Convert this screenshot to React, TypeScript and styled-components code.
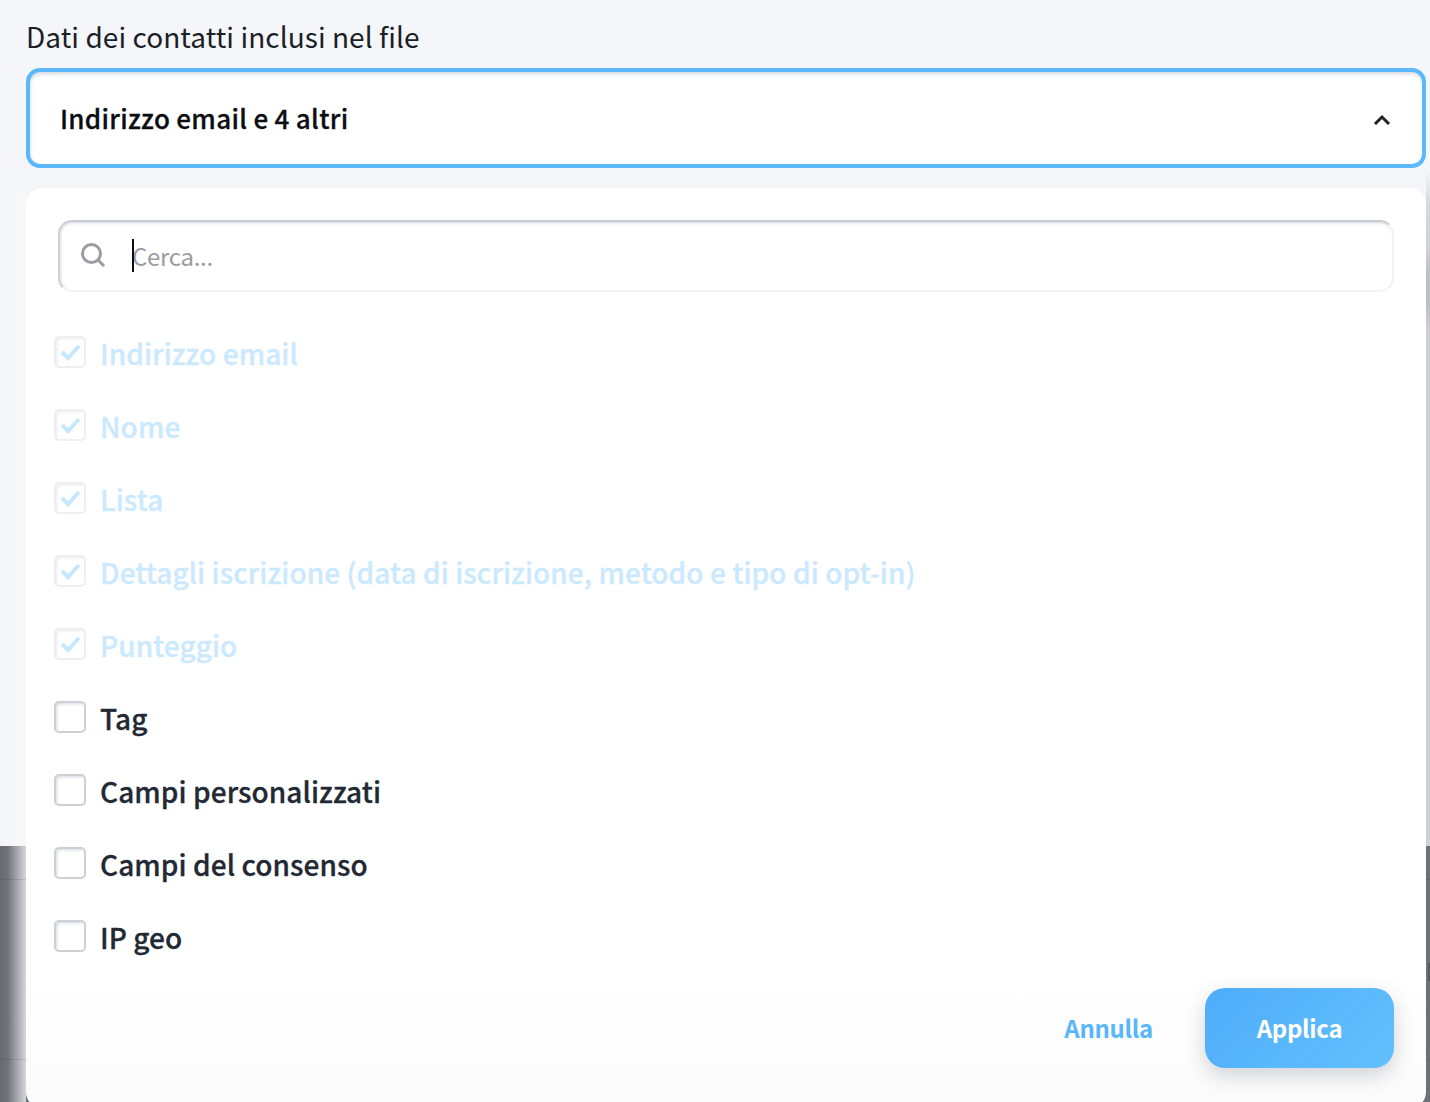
import { createGlobalStyle, styled } from "styled-components"

const GlobalStyle = createGlobalStyle`
    html, body {
        margin: 0;
        padding: 0;
        height: 100%;
        overflow: hidden;
    }

    body {
        background: #6d7077;
        font-family: "Noto Sans CJK JP", "Noto Sans", sans-serif;
    }
`

const Page = styled.div`
    position: relative;
    width: 1430px;
    height: 1102px;
    overflow: hidden;
`

const Backdrop = styled.div`
    display: flex;
    flex-direction: column;
    height: 1102px;
`

const FormArea = styled.div`
    height: 846px;
    box-sizing: border-box;
    padding: 15px 4px 0 26px;
    background:
        linear-gradient(
            #f5f6fa 170px, #d6d8db 205px, #cfd1d4 250px, #bcc0c5 275px,
            #bcc0c5 305px, #cfd1d4 330px, #cfd1d4 100%
        ) right top / 4px 100% no-repeat,
        linear-gradient(90deg, #f5f6fa, #f8f8f9) left 190px / 26px 100% no-repeat,
        #f5f6fa;
`

const TableArea = styled.div`
    position: relative;
    flex: 1;
    display: flex;
    flex-direction: column;
    padding-top: 33px;
    gap: 179px;
    background:
        linear-gradient(90deg, #666a72 0, #70747b 8px, #a5a7ac 17px, #d6d7da 26px, transparent 26px),
        #6d7077;
`

const TableLine = styled.div`
    height: 1px;
    background: rgba(30, 34, 40, 0.12);
`

const EdgeNotch = styled.div`
    position: absolute;
    right: 0;
    top: 117px;
    width: 2px;
    height: 18px;
    background: #565a61;
`

const FieldLabel = styled.div`
    height: 42px;
    line-height: 42px;
    font-size: 28px;
    letter-spacing: 0.06px;
    color: #1b1f26;
    margin-bottom: 11px;
`

const SelectBox = styled.div`
    box-sizing: border-box;
    height: 100px;
    display: flex;
    align-items: center;
    justify-content: space-between;
    padding: 0 30px;
    background: #fff;
    border: 4px solid #5bb9fb;
    border-radius: 14px;
    box-shadow: inset 0 4px 4px -2px rgba(160, 170, 180, 0.45), inset 3px 0 4px -3px rgba(160, 170, 180, 0.3);
`

const SelectValue = styled.span`
    margin-bottom: 2px;
    font-size: 26px;
    font-weight: 500;
    letter-spacing: 0.3px;
    -webkit-text-stroke: 0.3px #0c0e12;
    color: #0c0e12;
`

const Chevron = styled.svg`
    margin-top: 4px;
`

const Menu = styled.div`
    position: absolute;
    left: 26px;
    top: 188px;
    width: 1400px;
    height: 920px;
    box-sizing: border-box;
    padding: 32px 32px 0 28px;
    background: linear-gradient(#fff 85%, #fbfbfb);
    border-radius: 16px;
`

const SearchBox = styled.div`
    box-sizing: border-box;
    height: 72px;
    margin-left: 4px;
    display: flex;
    align-items: center;
    padding: 0 0 2px 20px;
    border: 2px solid #f3f4f8;
    border-top-color: #c9ced4;
    border-left-color: #cdd2d7;
    border-radius: 14px;
    box-shadow: inset 0 3px 3px -2px rgba(170, 178, 188, 0.5), inset 3px 0 3px -2px rgba(170, 178, 188, 0.4);
`

const SearchPlaceholder = styled.span`
    position: relative;
    margin-left: 26px;
    font-size: 24px;
    letter-spacing: -0.3px;
    color: #9a9da3;
`

const Caret = styled.span`
    position: absolute;
    left: 0;
    top: 1px;
    width: 2px;
    height: 33px;
    background: #0c0e12;
`

const OptionList = styled.div`
    display: flex;
    flex-direction: column;
    margin-top: 24px;
`

const OptionRow = styled.div`
    height: 73px;
    display: flex;
    align-items: center;
    gap: 14px;
`

const CheckBox = styled.div<{ $locked?: boolean }>`
    box-sizing: border-box;
    width: 32px;
    height: 32px;
    display: flex;
    align-items: center;
    justify-content: center;
    margin-top: -2px;
    border: 2px solid ${ props => props.$locked ? "#eeeff1" : "#cdd0d4" };
    border-radius: 5px;
    box-shadow: ${ props => props.$locked
        ? "inset 2px 2px 3px -1px rgba(190, 195, 205, 0.35)"
        : "inset 2px 2px 3px -1px rgba(170, 180, 195, 0.5)" };
`

const OptionText = styled.span<{ $locked?: boolean }>`
    font-size: 28px;
    font-weight: 500;
    letter-spacing: 0.07px;
    -webkit-text-stroke: 0.3px ${ props => props.$locked ? "#cbe9fe" : "#222933" };
    color: ${ props => props.$locked ? "#cbe9fe" : "#222933" };
`

const ActionBar = styled.div`
    display: flex;
    align-items: center;
    justify-content: flex-end;
    margin-top: 15px;
    gap: 52px;
`

const CancelButton = styled.button`
    border: 0;
    padding: 0 0 2px;
    background: none;
    font-family: inherit;
    font-size: 24px;
    font-weight: 700;
    letter-spacing: -0.3px;
    color: #58b6fb;
`

const ApplyButton = styled.button`
    width: 189px;
    height: 80px;
    border: 0;
    padding: 0 0 2px;
    border-radius: 20px;
    background: linear-gradient(135deg, #4facfa, #62c1fc);
    font-family: inherit;
    font-size: 24px;
    font-weight: 700;
    letter-spacing: -0.3px;
    color: #fff;
    box-shadow: 0 8px 20px rgba(60, 70, 85, 0.22);
`

const options = [
    { label: "Indirizzo email", locked: true },
    { label: "Nome", locked: true },
    { label: "Lista", locked: true },
    { label: "Dettagli iscrizione (data di iscrizione, metodo e tipo di opt-in)", locked: true },
    { label: "Punteggio", locked: true },
    { label: "Tag", locked: false },
    { label: "Campi personalizzati", locked: false },
    { label: "Campi del consenso", locked: false },
    { label: "IP geo", locked: false },
]

const App = () => {
    return (
        <Page>
            <GlobalStyle />
            <Backdrop>
                <FormArea>
                    <FieldLabel>Dati dei contatti inclusi nel file</FieldLabel>
                    <SelectBox>
                        <SelectValue>Indirizzo email e 4 altri</SelectValue>
                        <Chevron width="20" height="14" viewBox="0 0 20 14" fill="none">
                            <path d="M3 11 L10 4 L17 11" stroke="#1f242c" strokeWidth="3" />
                        </Chevron>
                    </SelectBox>
                </FormArea>
                <TableArea>
                    <TableLine />
                    <TableLine />
                    <EdgeNotch />
                </TableArea>
            </Backdrop>
            <Menu>
                <SearchBox>
                    <svg width="26" height="26" viewBox="0 0 26 26" fill="none">
                        <circle cx="11.5" cy="11.5" r="9" stroke="#9a9da3" strokeWidth="3" />
                        <path d="M18 18 L24 24" stroke="#9a9da3" strokeWidth="3" />
                    </svg>
                    <SearchPlaceholder>
                        <Caret />
                        Cerca...
                    </SearchPlaceholder>
                </SearchBox>
                <OptionList>
                    {options.map(option => (
                        <OptionRow key={option.label}>
                            <CheckBox $locked={option.locked}>
                                {option.locked && (
                                    <svg width="22" height="18" viewBox="0 0 22 18" fill="none">
                                        <path d="M3 9 L9 15 L20 3" stroke="#c6e8fe" strokeWidth="4" />
                                    </svg>
                                )}
                            </CheckBox>
                            <OptionText $locked={option.locked}>{option.label}</OptionText>
                        </OptionRow>
                    ))}
                </OptionList>
                <ActionBar>
                    <CancelButton>Annulla</CancelButton>
                    <ApplyButton>Applica</ApplyButton>
                </ActionBar>
            </Menu>
        </Page>
    )
}

export default App
